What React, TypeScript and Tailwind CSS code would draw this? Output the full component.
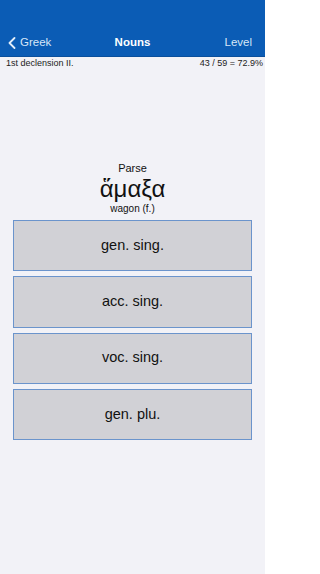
import React from "react";

const answers = ["gen. sing.", "acc. sing.", "voc. sing.", "gen. plu."];

export default function App() {
  return (
    <div
      className="w-[265px] h-[574px] bg-[#f2f2f7] flex flex-col overflow-hidden"
      style={{ fontFamily: '"Liberation Sans", Arial, sans-serif' }}
    >
      <div className="h-[57px] bg-[#0b5cb5] flex items-end shrink-0 border-b border-[#0a4f9c]">
        <div className="h-[26px] w-full relative flex items-center justify-center text-white text-[11.5px] mb-[0px]">
          <div className="absolute left-[8px] flex items-center gap-[4px] text-[#d6e6f8]">
            <svg width="8" height="12" viewBox="0 0 8 12" fill="none">
              <path d="M6.5 1 L1.5 6 L6.5 11" stroke="#e3eefa" strokeWidth="1.8" strokeLinecap="round" strokeLinejoin="round" />
            </svg>
            <span>Greek</span>
          </div>
          <span className="font-bold">Nouns</span>
          <span className="absolute right-[13px] text-[#d6e6f8]">Level</span>
        </div>
      </div>
      <div className="h-[13px] flex items-center justify-between px-[6px] pr-[2px] text-[9px] text-[#222]">
        <span>1st declension II.</span>
        <span>43 / 59 = 72.9%</span>
      </div>
      <div className="flex flex-col items-center pt-[92px] text-[#111]">
        <div className="text-[11px] leading-[13px]">Parse</div>
        <div className="text-[24px] leading-[28px]">ἅμαξα</div>
        <div className="text-[10px] leading-[12px]">wagon (f.)</div>
      </div>
      <div className="flex flex-col gap-[5px] px-[13px] mt-[5px]">
        {answers.map((a) => (
          <div
            key={a}
            className="h-[51.3px] bg-[#d1d1d6] border border-[#6b94cc] flex items-center justify-center text-[14.5px] text-[#111]"
          >
            {a}
          </div>
        ))}
      </div>
    </div>
  );
}
